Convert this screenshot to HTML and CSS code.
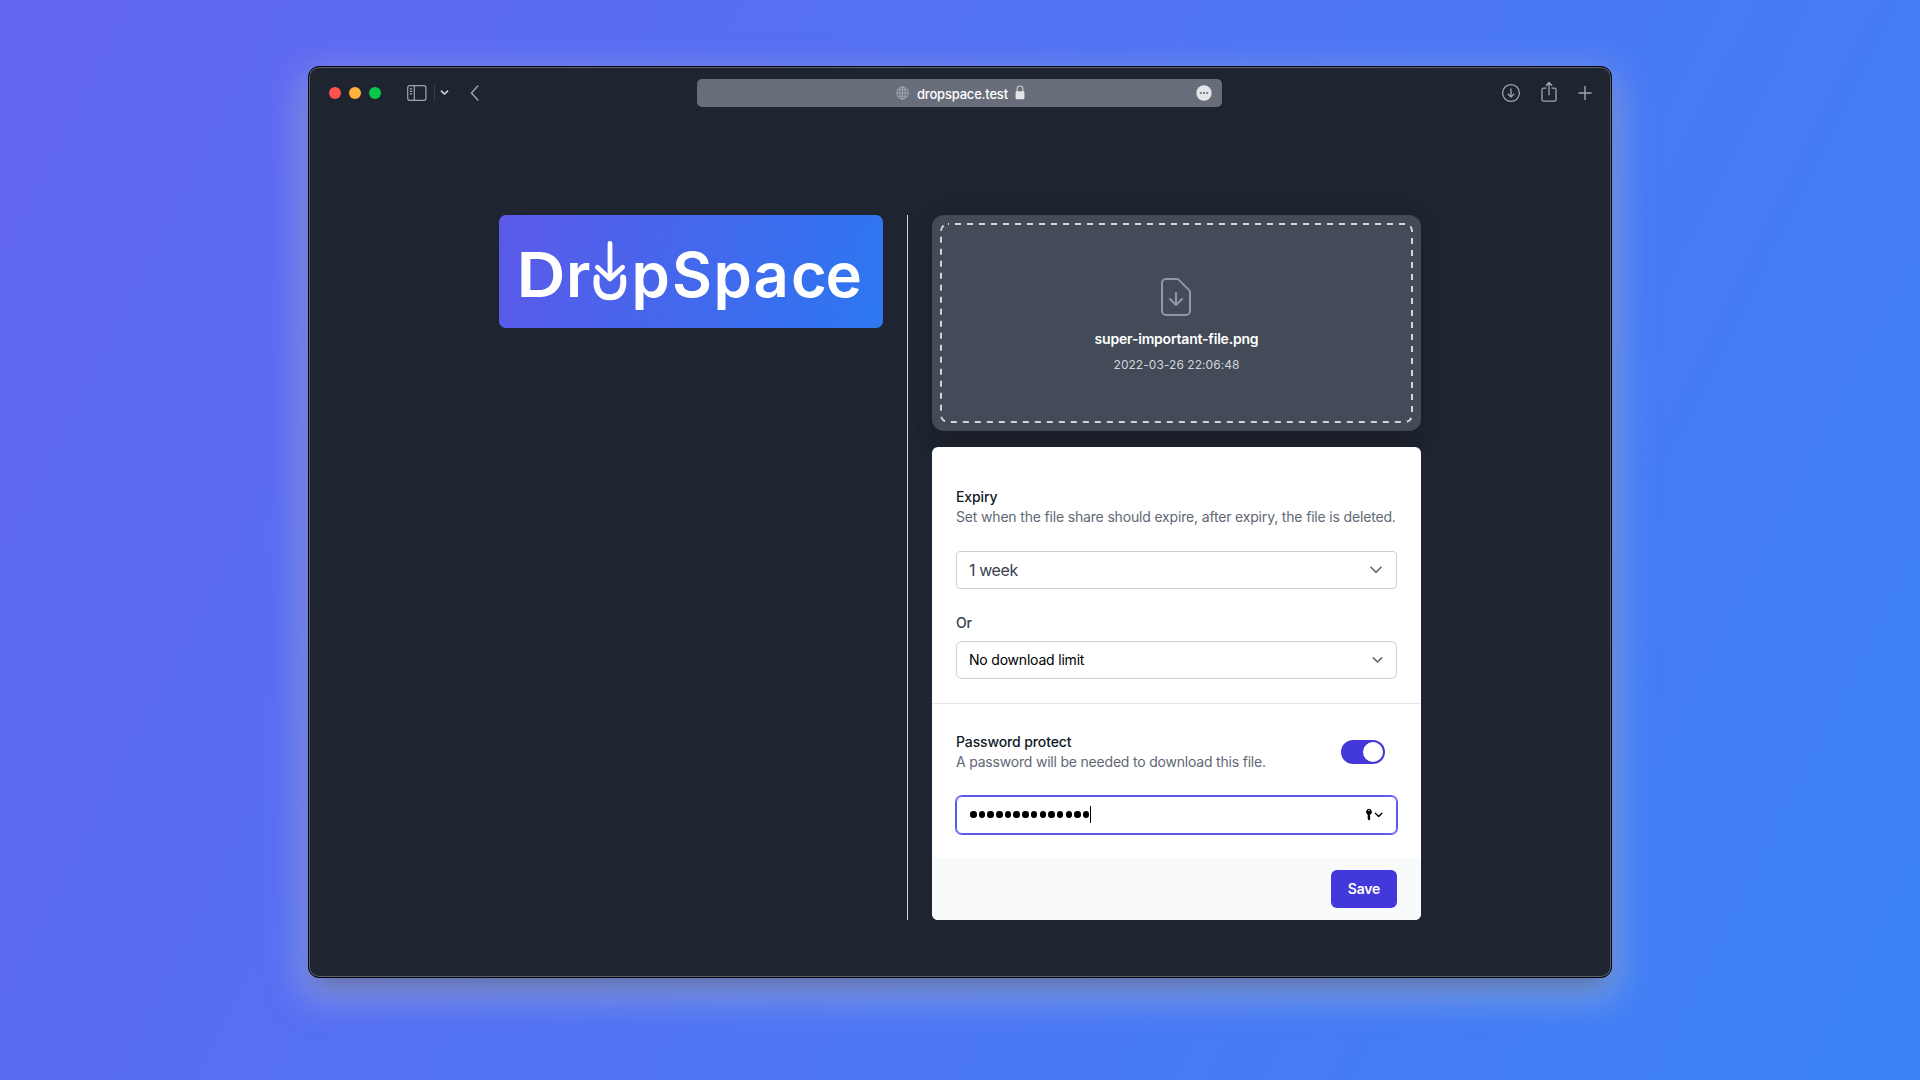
FILE: index.html
```html
<!DOCTYPE html>
<html lang="en">
<head>
<meta charset="utf-8">
<title>DropSpace</title>
<link rel="stylesheet" href="styles.css">
</head>
<body>
<main class="window">
  <header class="toolbar">
    <div class="lights"><span class="light red"></span><span class="light amber"></span><span class="light green"></span></div>
    <svg class="icon sidebar" width="20" height="16" viewBox="0 0 20 16" fill="none" stroke="currentColor" stroke-width="1.2"><rect x=".7" y=".7" width="18.2" height="14.6" rx="2"/><path d="M7.3 1v14M2.8 3.8h2.4M2.8 6.3h2.4M2.8 8.8h2.4"/></svg>
    <span class="separator"></span>
    <svg class="icon menu-arrow" width="9" height="6" viewBox="0 0 9 6" fill="none" stroke="currentColor" stroke-width="1.6" stroke-linecap="round"><path d="M1.4 1.2l3.1 2.8 3.1-2.8"/></svg>
    <svg class="icon back" width="9" height="16" viewBox="0 0 9 16" fill="none" stroke="currentColor" stroke-width="1.4" stroke-linecap="round"><path d="M7.8 1L1.4 8l6.4 7"/></svg>
    <div class="address">
      <span class="address-site">
        <svg class="globe" width="13" height="14" viewBox="0 0 13 14" fill="none" stroke="#adb2ba" stroke-width=".8"><ellipse cx="6.5" cy="7" rx="5.8" ry="6.1"/><ellipse cx="6.5" cy="7" rx="2.8" ry="6.1"/><path d="M6.5 1v12M.7 7h11.6M1.6 3.8h9.8M1.6 10.2h9.8"/></svg>
        <span class="host">dropspace.test</span>
        <svg class="lock" width="10" height="15" viewBox="0 0 10 15"><path d="M2.2 7V3.8a2.8 2.8 0 0 1 5.6 0V7" fill="none" stroke="#c9ccd1" stroke-width="1.2"/><rect x=".6" y="6.3" width="8.8" height="8" rx="1" fill="#e4e5e8"/></svg>
      </span>
      <svg class="more" width="16" height="16" viewBox="0 0 16 16"><circle cx="8" cy="8" r="7.700" fill="#e4e5e8"/><g fill="#686e79"><circle cx="4.800" cy="8" r="1.100"/><circle cx="8" cy="8" r="1.100"/><circle cx="11.200" cy="8" r="1.100"/></g></svg>
    </div>
    <div class="actions">
      <svg width="20" height="20" viewBox="0 0 20 20" fill="none" stroke="currentColor" stroke-width="1.3"><circle cx="10" cy="10" r="8.4"/><path d="M10 5.6v8.4M6.8 10.8l3.2 3.3 3.2-3.3"/></svg>
      <svg class="share" width="16" height="22" viewBox="0 0 16 22" fill="none" stroke="currentColor" stroke-width="1.3"><path d="M5.4 7.2H2.6A1.6 1.6 0 0 0 1 8.8v9.8a1.6 1.6 0 0 0 1.6 1.6h10.8a1.6 1.6 0 0 0 1.6-1.6V8.8a1.6 1.6 0 0 0-1.6-1.6h-2.8M8 14.3V2M4.9 4.7L8 1.5l3.1 3.2"/></svg>
      <svg width="14" height="16" viewBox="0 0 14 16" fill="none" stroke="currentColor" stroke-width="1.4"><path d="M7 1v14M.4 8h13.2"/></svg>
    </div>
  </header>

  <section class="content">
    <div class="brand">
      <svg class="logo" width="384" height="113" viewBox="0 0 384 113" role="img" aria-label="DropSpace">
        <text y="82" x="17.500" textLength="49" lengthAdjust="spacingAndGlyphs">D</text>
        <text y="82" x="67">r</text>
        <path d="M111 28.500V63M98.500 52.200L111 64l12.500-11.800" stroke-width="4.800"/>
        <path d="M97.700 62.500c-1.600 14 4.300 19.800 13.200 19.800s14.800-5.800 13.200-19.800" stroke-width="6"/>
        <text y="82" x="132.500 173 214.500 254.500 292 326.500">pSpace</text>
      </svg>
    </div>
    <div class="rule"></div>
    <div class="panel">
      <div class="dropzone">
        <div class="dropzone-inner">
          <svg class="outline" width="473" height="200"><rect x="1" y="1" width="471" height="198" rx="7"/></svg>
          <svg class="file-icon" width="48" height="48" viewBox="0 0 24 24" fill="none" stroke="#8f99a6" stroke-width="1" stroke-linecap="round" stroke-linejoin="round"><path d="M12 10v6m0 0l-3-3m3 3l3-3m2 8H7a2 2 0 0 1-2-2V5a2 2 0 0 1 2-2h5.586a1 1 0 0 1 .707.293l5.414 5.414a1 1 0 0 1 .293.707V19a2 2 0 0 1-2 2z"/></svg>
          <p class="file-name">super-important-file.png</p>
          <p class="file-date">2022-03-26 22:06:48</p>
        </div>
      </div>
      <form class="card">
        <div class="group expiry">
          <h2>Expiry</h2>
          <p>Set when the file share should expire, after expiry, the file is deleted.</p>
          <div class="field large"><span>1 week</span><svg width="12" height="8" viewBox="0 0 12 8"><path d="M1 1.200l5 5 5-5"/></svg></div>
          <label>Or</label>
          <div class="field limit"><span>No download limit</span><svg width="12" height="8" viewBox="0 0 12 8"><path d="M2.300 1.900l4.200 4.100 4.200-4.100"/></svg></div>
        </div>
        <div class="group protect">
          <div class="protect-head">
            <div><h2>Password protect</h2><p>A password will be needed to download this file.</p></div>
            <span class="toggle"><span class="knob"></span></span>
          </div>
          <div class="field password">
            <span class="secret"><i></i><i></i><i></i><i></i><i></i><i></i><i></i><i></i><i></i><i></i><i></i><i></i><i></i><i></i><b class="caret"></b></span>
            <svg class="key" width="18" height="13" viewBox="0 0 18 13"><path d="M4 .7A3.200 3.200 0 0 0 2.700 6.700v4.400L4.200 12.500l1.300-1.400-.9-1 1-1-.9-1 .7-1.500A3.200 3.200 0 0 0 4 .7z"/><circle cx="4" cy="2.500" r=".7" fill="#fff"/><path d="M10.400 5.200l3.300 3.300L17 5.200"/></svg>
          </div>
        </div>
        <footer class="card-footer"><button type="button">Save</button></footer>
      </form>
    </div>
  </section>
</main>
</body>
</html>
```
FILE: styles.css
```css
* { box-sizing: border-box; }

body {
  margin: 0;
  height: 1080px;
  padding: 66px 308px 0;
  overflow: hidden;
  background: linear-gradient(117deg, #6366f1, #3b82f6);
  font-family: Inter, "Liberation Sans", sans-serif;
  font-size: 14px;
  line-height: 20px;
  letter-spacing: -.2px;
  color: #111827;
}

h2, p { margin: 0; font-size: 14px; line-height: 20px; white-space: nowrap; }
svg { display: block; flex: none; }

.window {
  width: 1304px;
  height: 912px;
  border: 1px solid #05080d;
  border-radius: 11px;
  background: #1f2530;
  box-shadow:
    inset 0 0 0 1px #59606a,
    0 14px 24px -10px rgba(60, 65, 85, .6),
    0 14px 34px 8px rgba(225, 222, 210, .34);
}

.toolbar {
  display: flex;
  align-items: center;
  height: 52px;
  padding: 0 19px 0 20px;
  color: #a0a5ad;
}

.lights { display: flex; gap: 8px; }
.light { width: 12px; height: 12px; border-radius: 50%; }
.red { background: #ff5150; }
.amber { background: #ffb33b; }
.green { background: #09c748; }
.sidebar { margin-left: 26px; }
.separator { width: 1px; height: 18px; margin-left: 7px; background: #353c46; }
.menu-arrow { margin-left: 5px; color: #d3d6da; }
.back { margin-left: 21px; }

.address {
  display: flex;
  flex: none;
  align-items: center;
  justify-content: space-between;
  width: 525px;
  height: 28px;
  margin-left: 218px;
  padding: 0 10px 0 199px;
  border-radius: 5px;
  background: #686e79;
}

.address-site { display: flex; align-items: center; }
.globe { margin-bottom: 1px; }
.host {
  width: 92px;
  margin: 0 6px 0 8px;
  padding-top: 1px;
  color: #fff;
  font-size: 13px;
  font-weight: 500;
  letter-spacing: -.2px;
  white-space: nowrap;
}
.lock { margin-bottom: 2px; }
.more { margin-bottom: 1px; }
.actions { display: flex; align-items: center; gap: 20px; margin-left: auto; }
.share { margin: 0 1px 2px 0; }

.content {
  display: flex;
  align-items: stretch;
  height: 705px;
  margin: 96px 0 0 190px;
  width: 922px;
}

.logo {
  border-radius: 7px;
  background: linear-gradient(107deg, #5b59e8, #2c77f1);
  fill: none;
  stroke: #fff;
  stroke-linecap: round;
  stroke-linejoin: round;
}
.logo text {
  fill: #fff;
  stroke: none;
  font: 600 61.5px Inter, sans-serif;
  letter-spacing: 0;
}

.rule { width: 1px; margin: 0 24px; background: #d6dae0; }

.panel { width: 489px; }

.dropzone {
  height: 216px;
  padding: 8px;
  border-radius: 12px;
  background: #424b57;
  box-shadow: 0 20px 25px -5px rgba(0, 0, 0, .14), 0 0 24px rgba(0, 0, 0, .09);
}
.dropzone-inner {
  position: relative;
  display: flex;
  flex-direction: column;
  align-items: center;
  height: 200px;
  padding-top: 50px;
  color: #fff;
}
.outline {
  position: absolute;
  top: 0;
  left: 0;
  fill: none;
  stroke: #d1d5db;
  stroke-width: 2;
  stroke-dasharray: 6 6;
  stroke-dashoffset: 5;
}
.file-icon { margin-right: 1px; }
.file-name { margin-top: 8px; font-weight: 600; }
.file-date { margin-top: 6px; font-size: 12px; letter-spacing: .05px; color: #d1d5db; }

.card {
  height: 473px;
  margin-top: 16px;
  border-radius: 6px;
  overflow: hidden;
  background: #fff;
}
.group { padding: 0 24px; }
.group h2 { font-weight: 500; letter-spacing: -.12px; }
.group p { color: #616876; }

.expiry { height: 257px; padding-top: 40px; border-bottom: 1px solid #e5e7eb; }
.expiry p { letter-spacing: -.17px; }
.expiry label { display: block; margin-top: 24px; font-weight: 500; color: #374151; }

.field {
  display: flex;
  align-items: center;
  justify-content: space-between;
  height: 38px;
  padding: 0 14px 0 12px;
  border: 1px solid #cbd0d8;
  border-radius: 6px;
  color: #000;
}
.field path { fill: none; stroke: #5b6472; stroke-width: 1.6; stroke-linecap: round; stroke-linejoin: round; }
.large { margin-top: 24px; border-radius: 4px; font-size: 16px; letter-spacing: -.4px; color: #374151; }
.limit { margin-top: 8px; padding-right: 13px; }

.protect { height: 154px; padding-top: 28px; }
.protect-head { display: flex; align-items: center; justify-content: space-between; padding-right: 12px; }

.toggle {
  display: flex;
  justify-content: flex-end;
  width: 44px;
  height: 24px;
  padding: 2px;
  border-radius: 12px;
  background: #4338d9;
}
.knob { width: 20px; height: 20px; border-radius: 50%; background: #fff; }

.password { margin-top: 24px; padding-right: 13px; border-color: #5d5bea; box-shadow: 0 0 0 1px #5d5bea; }
.secret { display: flex; align-items: center; gap: 2.2px; padding: 0 0 1px 1px; }
.secret i { width: 6.5px; height: 6.5px; border-radius: 50%; background: #000; }
.caret { width: 1px; height: 17px; margin-left: -2px; background: #000; }
.key { margin-bottom: 1px; }
.field .key path { fill: #000; stroke: none; }
.field .key path:last-child { fill: none; stroke: #000; stroke-width: 1.3; }

.card-footer {
  display: flex;
  justify-content: flex-end;
  height: 62px;
  padding: 12px 24px;
  background: #f9fafb;
}
button {
  width: 66px;
  height: 38px;
  padding: 0;
  border: 0;
  border-radius: 6px;
  background: #4338d9;
  color: #fff;
  font: 600 14px/20px Inter, sans-serif;
  letter-spacing: -.2px;
}
```
